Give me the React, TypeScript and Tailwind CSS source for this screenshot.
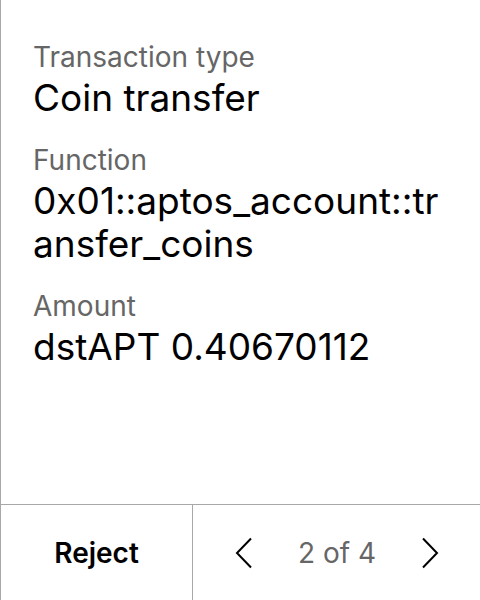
import React from 'react';

const Field: React.FC<{ label: string; value: string }> = ({ label, value }) => (
  <div className="flex flex-col">
    <div className="text-[28px] leading-[38px] text-[#666666]">{label}</div>
    <div className="text-[37px] leading-[43px] text-black break-all">{value}</div>
  </div>
);

const App: React.FC = () => {
  return (
    <div
      className="w-[480px] h-[600px] flex flex-col bg-white border-l border-[#a8a8a8]"
      style={{ fontFamily: 'Inter, "Noto Sans", sans-serif' }}
    >
      <div className="flex-1 flex flex-col gap-[22px] pl-[32px] pr-[32px] pt-[38px]">
        <Field label="Transaction type" value="Coin transfer" />
        <Field label="Function" value="0x01::aptos_account::transfer_coins" />
        <Field label="Amount" value="dstAPT 0.40670112" />
      </div>
      <div className="h-[96px] flex border-t border-[#a8a8a8]">
        <button className="w-[192px] flex items-center justify-center text-[28px] font-semibold text-black border-r border-[#a8a8a8]">
          Reject
        </button>
        <div className="flex-1 flex items-center justify-between pl-[42px] pr-[41px]">
          <svg width="18" height="32" viewBox="0 0 18 32" fill="none" stroke="black" strokeWidth="2">
            <path d="M16 1.5 L2 16 L16 30.5" />
          </svg>
          <span className="text-[28px] text-[#666666]">2 of 4</span>
          <svg width="18" height="32" viewBox="0 0 18 32" fill="none" stroke="black" strokeWidth="2">
            <path d="M2 1.5 L16 16 L2 30.5" />
          </svg>
        </div>
      </div>
    </div>
  );
};

export default App;
